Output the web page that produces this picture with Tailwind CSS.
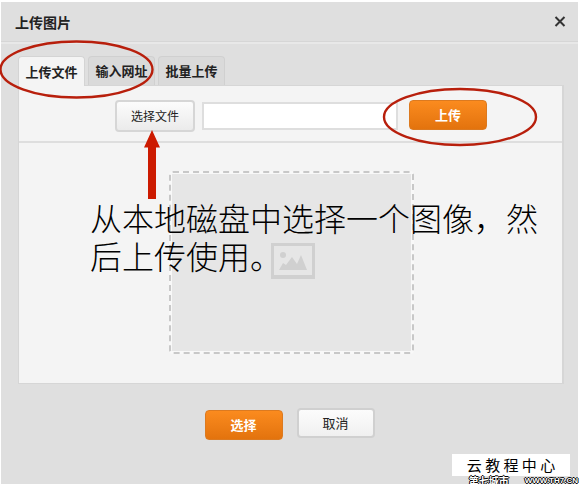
<!DOCTYPE html>
<html lang="zh-CN">
<head>
    <meta charset="UTF-8">
    <meta name="viewport" content="width=device-width, initial-scale=1.0">
    <title>上传图片</title>
    <script src="https://cdn.jsdelivr.net/npm/@tailwindcss/browser@4"></script>
</head>
<body class="bg-white text-[#222] font-['Noto_Sans_CJK_SC',sans-serif]">
    <!-- Dialog -->
    <main class="relative mt-0.5 ml-px mr-0.5 pb-11 bg-[#dfdfdf]">
        <header class="flex items-center justify-between h-10 pl-3.5 pr-2.5 border-b border-[#d6d6d6]">
            <h1 class="text-sm leading-5 font-bold">上传图片</h1>
            <button type="button" aria-label="关闭" class="p-0.5">
                <svg class="block w-3 h-3" viewBox="0 0 12 12" fill="none" stroke="#333" stroke-width="2">
                    <path d="M1.500 1L10.500 10M10.500 1L1.500 10"/>
                </svg>
            </button>
        </header>

        <div class="pt-3 pl-[17px] pr-3.5 border-t-2 border-[#e8e8e8]">
            <!-- Tabs -->
            <nav class="flex gap-[3px] text-[13px] leading-5 font-bold">
                <button type="button" class="relative z-10 -mb-px h-[30px] w-[67px] rounded-t border border-b-0 border-[#d4d4d4] bg-[#f4f4f4]">上传文件</button>
                <button type="button" class="h-[29px] w-[67px] rounded-t border border-b-0 border-[#d0d0d0] bg-[#dadada]">输入网址</button>
                <button type="button" class="h-[29px] w-[67px] rounded-t border border-b-0 border-[#d0d0d0] bg-[#dadada]">批量上传</button>
            </nav>

            <section class="border border-r-2 border-[#d6d6d6] bg-[#f4f4f4]">
                <div class="flex items-start h-[57px] pt-3.5 pl-24 border-b-2 border-[#dedede]">
                    <button type="button" class="w-20 h-8 rounded-sm border-2 border-[#d6d6d6] bg-linear-to-b from-[#fcfcfc] to-[#ebebeb] text-xs">选择文件</button>
                    <input type="text" aria-label="文件路径" class="w-[196px] h-7 mt-0.5 ml-[7px] px-2 border-2 border-[#dedede] bg-white text-xs">
                    <button type="button" class="w-[78px] h-[30px] ml-[11px] rounded-sm border border-[#dc7a20] bg-linear-to-b from-[#fb8b1e] to-[#e3730d] text-[13px] font-bold text-white">上传</button>
                </div>
                <!-- Preview area -->
                <div class="flex justify-center h-60 pt-7 pl-0.5">
                    <div class="w-[245px] h-[183px] border-2 border-dashed border-[#c8c8c8] rounded bg-[#f8f8f8] p-px">
                        <div class="flex h-full items-center justify-center pl-0.5 pb-1 bg-[#e6e6e6]">
                            <svg class="w-11 h-9" viewBox="0 0 44 36">
                                <rect x="1.5" y="1.5" width="41" height="33" fill="#e6e6e6" stroke="#d0d0d0" stroke-width="3"/>
                                <path d="M0 32H44V36H0Z" fill="#d0d0d0"/>
                                <circle cx="12" cy="12" r="3" fill="#d0d0d0"/>
                                <path d="M8 27L12 20L15 22L21 14L26 21L30 12L36 27Z" fill="#d0d0d0"/>
                            </svg>
                        </div>
                    </div>
                </div>
            </section>
        </div>

        <footer class="flex items-start justify-center gap-3.5 pt-6">
            <button type="button" class="w-[78px] h-[30px] mt-0.5 rounded-sm border border-[#dc7a20] bg-linear-to-b from-[#fb8b1e] to-[#e3730d] text-[13px] font-bold text-white">选择</button>
            <button type="button" class="w-[78px] h-[30px] rounded-sm border-2 border-[#d0d0d0] bg-linear-to-b from-[#fcfcfc] to-[#f0f0f0] text-[13px]">取消</button>
        </footer>

        <!-- Annotations drawn over the dialog -->
        <svg class="absolute z-20 -left-px -top-0.5 w-[580px] h-[210px] pointer-events-none" viewBox="0 0 580 210" fill="none" stroke="#b81f0c" stroke-width="2.4">
            <ellipse cx="76.500" cy="69.500" rx="76" ry="28"/>
            <ellipse cx="460" cy="117" rx="76" ry="28"/>
            <path d="M152 130L160 147.500H156V199H148V147.500H144Z" fill="#cc1a00" stroke="none"/>
        </svg>
        <p class="absolute z-20 left-[89px] top-[196px] w-[450px] text-[32px] leading-[38px] font-light text-black pointer-events-none">从本地磁盘中选择一个图像，然后上传使用。</p>

        <!-- Watermark -->
        <div class="absolute right-2 bottom-2 w-[118px] h-[22px] bg-white text-center text-[15px] leading-[22px] text-black">云 教 程 中 心</div>
        <div class="absolute right-0 -bottom-0.5 flex gap-4 h-2.5 items-center text-white [text-shadow:1px_0_#000,-1px_0_#000,0_1px_#000,0_-1px_#000]">
            <span class="text-[10px] leading-[10px] font-bold">第七城市</span>
            <span class="text-[8px] leading-[10px] font-bold font-['Liberation_Sans',sans-serif]">WWW.TH7.CN</span>
        </div>
    </main>
</body>
</html>
